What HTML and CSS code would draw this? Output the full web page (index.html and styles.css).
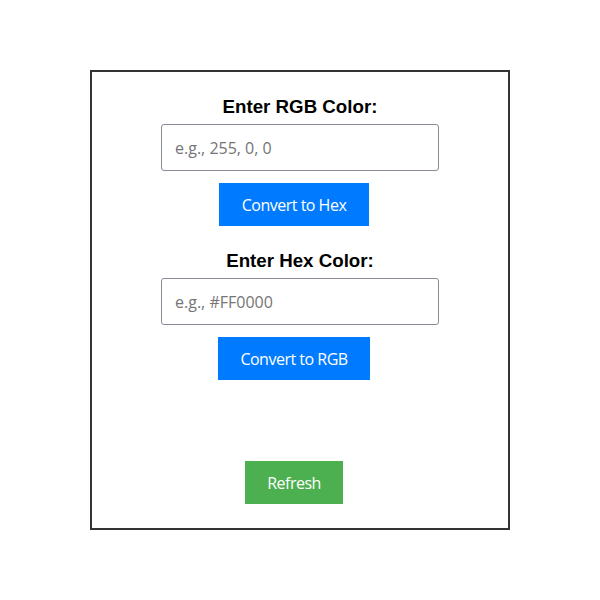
FILE: index.html
```html
<!DOCTYPE html>
<html lang="en">
<head>
  <meta charset="UTF-8">
  <title>Color Converter</title>
  <link rel="stylesheet" href="styles.css">
</head>
<body>
  <div class="converter">
    <label class="field-label" for="rgb">Enter RGB Color:</label>
    <input type="text" id="rgb" class="field" placeholder="e.g., 255, 0, 0">
    <button class="btn btn-blue btn-hex">Convert to Hex</button>

    <label class="field-label" for="hex">Enter Hex Color:</label>
    <input type="text" id="hex" class="field" placeholder="e.g., #FF0000">
    <button class="btn btn-blue">Convert to RGB</button>

    <div class="result"></div>

    <button class="btn btn-green">Refresh</button>
  </div>
</body>
</html>
```

FILE: styles.css
```css
html, body {
  margin: 0;
  padding: 0;
  height: 100vh;
  background: #fff;
}
body {
  display: flex;
  align-items: center;
  justify-content: center;
}
.converter {
  width: 416px;
  height: 408px;
  border: 2px solid #333;
  padding: 24px 0 24px 0;
  display: flex;
  flex-direction: column;
  align-items: center;
}
.field-label {
  font-family: "Liberation Sans", Arial, sans-serif;
  font-weight: 700;
  font-size: 18.72px;
  line-height: 21px;
  color: #000;
  margin-bottom: 7px;
}
.field {
  box-sizing: border-box;
  width: 278px;
  height: 47px;
  padding: 0 13px;
  border: 1px solid #8a8a96;
  border-radius: 3px;
  font-family: "Open Sans", sans-serif;
  font-size: 16px;
  color: #222;
  outline: none;
}
.field::placeholder {
  color: #757575;
}
.btn {
  border: none;
  height: 43px;
  margin-top: 12px;
  margin-right: 12px;
  color: #fff;
  font-family: "Open Sans", sans-serif;
  font-size: 16px;
  letter-spacing: -0.5px;
  cursor: pointer;
}
.btn-blue {
  background: #007bff;
  width: 152px;
}
.btn-hex {
  width: 150px;
  margin-bottom: 24px;
}
.btn-green {
  background: #4caf50;
  width: 98px;
  margin-top: auto;
}
```
